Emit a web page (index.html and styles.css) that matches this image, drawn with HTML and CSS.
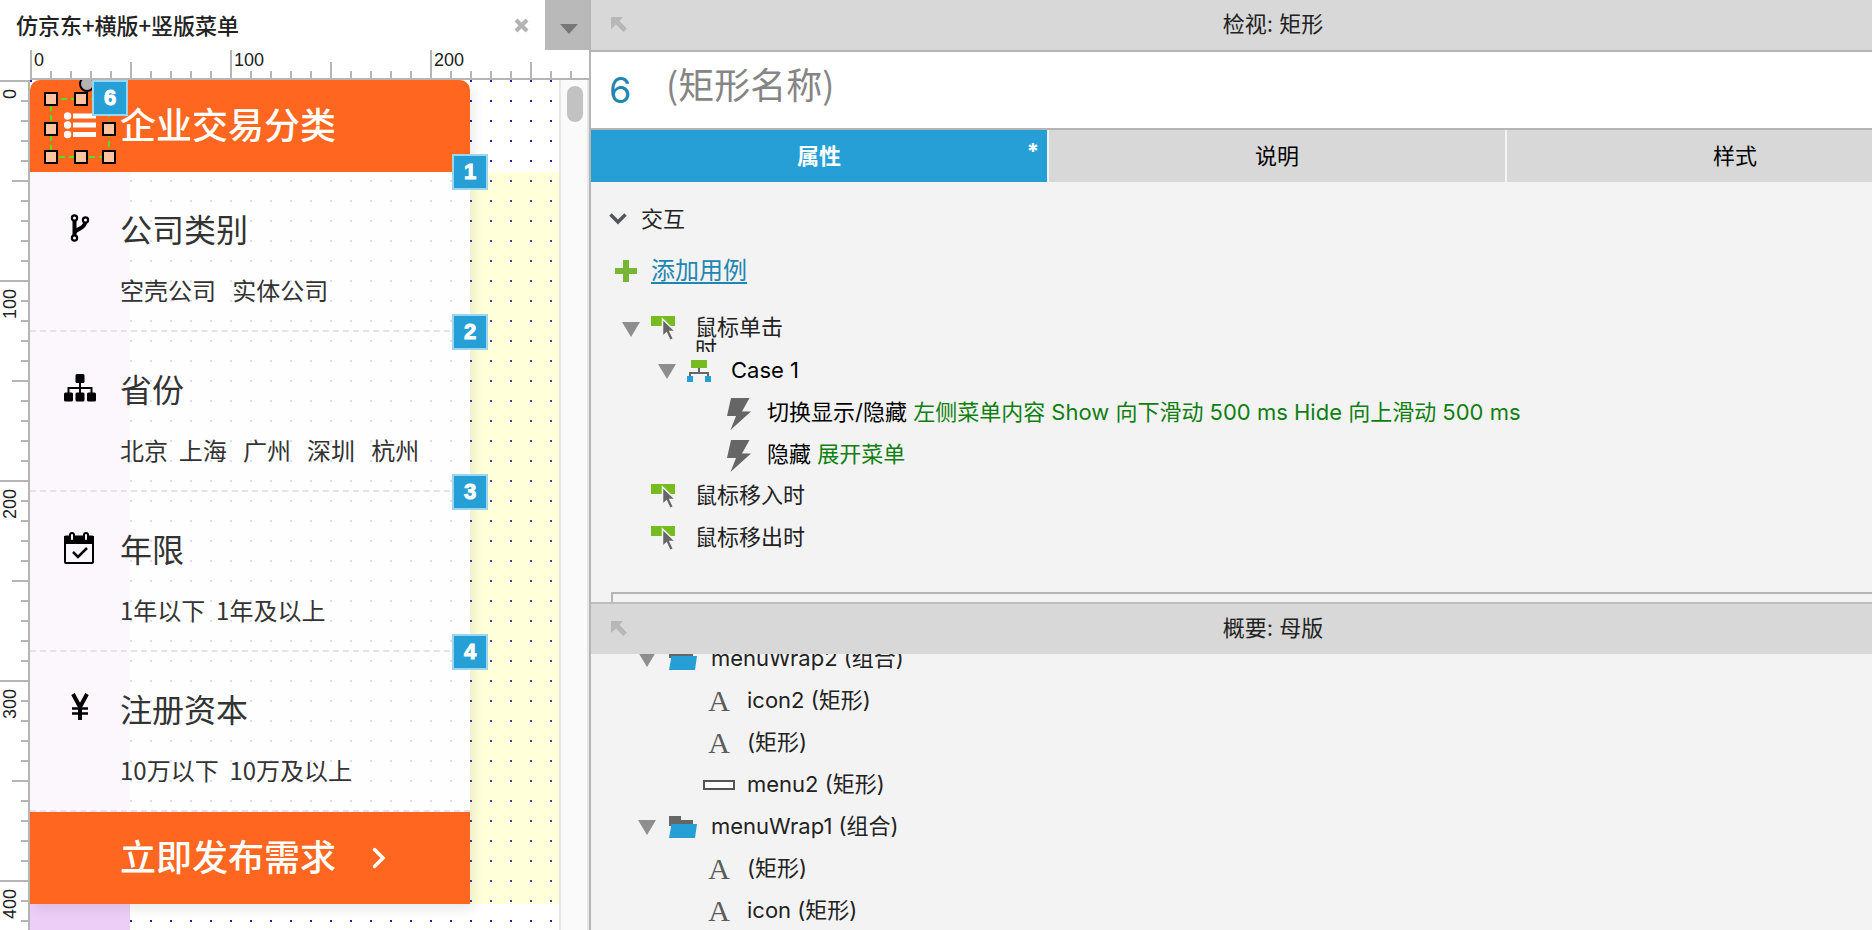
FILE: index.html
```html
<!DOCTYPE html>
<html lang="zh-CN">
<head>
<meta charset="utf-8">
<title>仿京东+横版+竖版菜单</title>
<link rel="stylesheet" href="styles.css">
</head>
<body>
<svg class="defs" aria-hidden="true">
  <symbol id="dock" viewBox="0 0 16 16"><path d="M0 0h12L8.500 4 16 11.500 12.500 15 5 7.500 0 12z"/></symbol>
  <symbol id="down" viewBox="0 0 18 15"><path d="M0 0h18L9 15z"/></symbol>
  <symbol id="event" viewBox="0 0 24 25"><path fill="#76bc21" d="M0 0h24v10H0z"/><path fill="#666" stroke="#f3f3f3" stroke-width="1.500" d="M11.500 3v17.500l4-3.500 3.500 7.500 3.500-1.500-3.500-7.500h5.500z"/></symbol>
  <symbol id="bolt" viewBox="0 0 24 32"><path d="M4 0h18.500l-7.500 13.500h9L3.500 32l5.500-14H0z"/></symbol>
  <symbol id="folder" viewBox="0 0 28 22"><path fill="#666" d="M0 0h12v4h12v6H0z"/><path fill="#269fd7" d="M2.500 8H28l-2 14H0z"/></symbol>
</svg>
<div class="app">
  <main class="workspace">
    <div class="doc-tabs">
      <span class="doc-title">仿京东+横版+竖版菜单</span>
      <button class="doc-close" aria-label="关闭"><svg width="15" height="15" viewBox="0 0 15 15"><path d="M2 2l11 11M13 2L2 13" stroke="#b3b3b3" stroke-width="4"/></svg></button>
      <button class="doc-more" aria-label="更多"><svg width="18" height="10" viewBox="0 0 18 10"><path d="M0 0h18L9 10z" fill="#777"/></svg></button>
    </div>
    <div class="ruler-x"><span>0</span><span>100</span><span>200</span></div>
    <div class="stage">
      <div class="ruler-y"><div><span>0</span></div><div><span>100</span></div><div><span>200</span></div><div><span>300</span></div><div><span>400</span></div></div>
      <div class="canvas">
        <div class="purple"></div>
        <div class="yellow"></div>
        <nav class="menu">
          <div class="menu-head">
            <svg class="menu-icon" viewBox="0 0 32 36" fill="#fff"><circle cx="3.500" cy="9" r="3.800"/><circle cx="3.500" cy="18" r="3.800"/><circle cx="3.500" cy="27.500" r="3.800"/><path d="M9 6.500h23v5H9zM9 15.500h23v5H9zM9 25h23v5H9z"/></svg>
            <span>企业交易分类</span>
          </div>
          <section class="item">
            <h2><svg class="menu-icon" viewBox="0 0 32 36" fill="none" stroke="#000"><path d="M10.500 10v16M10.500 23c1-5 10.500-3 11-12" stroke-width="4"/><g fill="#fff" stroke-width="2.200"><circle cx="10.500" cy="8" r="2.600"/><circle cx="21.500" cy="10" r="2.600"/><circle cx="10.500" cy="28" r="2.600"/></g></svg>公司类别</h2>
            <p>空壳公司&nbsp;&nbsp;&nbsp;实体公司</p>
          </section>
          <section class="item">
            <h2><svg class="menu-icon" viewBox="0 0 32 36"><path d="M4.500 24v-6h23v6M16 12v12" fill="none" stroke="#000" stroke-width="2"/><rect x="11.500" y="4" width="9" height="9" rx="1.500"/><rect y="22.500" width="9" height="9" rx="1.500"/><rect x="11.500" y="22.500" width="9" height="9" rx="1.500"/><rect x="23" y="22.500" width="9" height="9" rx="1.500"/></svg>省份</h2>
            <p>北京&nbsp;&nbsp;上海&nbsp;&nbsp;&nbsp;广州&nbsp;&nbsp;&nbsp;深圳&nbsp;&nbsp;&nbsp;杭州</p>
          </section>
          <section class="item">
            <h2><svg class="menu-icon" viewBox="0 0 32 36" fill="none" stroke="#000" stroke-width="2"><path d="M1 7h28v6H1z" fill="#000"/><rect x="1" y="6.500" width="28" height="26.500" rx="1"/><path d="M9 22l5 5 9-9" stroke-width="2.500"/><g fill="#fff"><rect x="6" y="3" width="4" height="8" rx="2"/><rect x="20" y="3" width="4" height="8" rx="2"/></g></svg>年限</h2>
            <p>1年以下&nbsp;&nbsp;1年及以上</p>
          </section>
          <section class="item">
            <h2><svg class="menu-icon" viewBox="0 0 32 36" fill="none" stroke="#000"><path d="M9 4l7 13L23 4M16 16v14" stroke-width="4"/><path d="M8 18.500h16M8 23.500h16" stroke-width="2.500"/></svg>注册资本</h2>
            <p>10万以下&nbsp;&nbsp;10万及以上</p>
          </section>
          <button class="menu-foot">立即发布需求<svg width="14" height="22" viewBox="0 0 14 22"><path d="M2.500 2.500L11 11l-8.500 8.500" fill="none" stroke="#fff" stroke-width="3.500" stroke-linecap="round"/></svg></button>
        </nav>
        <svg class="selection" width="90" height="90" viewBox="0 0 90 90">
          <circle cx="57" cy="4" r="7" fill="#b3b3b3" stroke="#000" stroke-width="2"/>
          <rect x="21" y="19" width="58" height="58" fill="none" stroke="#4fe02a" stroke-width="2" stroke-dasharray="6 4"/>
          <g fill="#ffc3a1" stroke="#000" stroke-width="2"><path d="M15 13h12v12H15zM45 13h12v12H45zM15 43h12v12H15zM73 43h12v12H73zM15 71h12v12H15zM45 71h12v12H45zM73 71h12v12H73z"/></g>
        </svg>
        <span class="badge b6">6</span>
        <span class="badge b1">1</span>
        <span class="badge b2">2</span>
        <span class="badge b3">3</span>
        <span class="badge b4">4</span>
      </div>
      <div class="scrollbar"><div class="thumb"></div></div>
    </div>
  </main>
  <aside class="side">
    <section class="inspector">
      <header class="pane-head"><svg class="dock"><use href="#dock"/></svg>检视: 矩形</header>
      <div class="name-row"><label for="shape-name">6</label><input id="shape-name" placeholder="(矩形名称)"></div>
      <div class="tabs">
        <button class="tab active">属性<span class="dirty">*</span></button>
        <button class="tab">说明</button>
        <button class="tab">样式</button>
      </div>
      <div class="props">
        <h3><svg width="18" height="12" viewBox="0 0 18 12"><path d="M1.500 1.500L9 9l7.500-7.500" fill="none" stroke="#55565c" stroke-width="3.500"/></svg>交互</h3>
        <div class="add"><svg width="22" height="22" viewBox="0 0 22 22"><path d="M8 0h6v8h8v6h-8v8H8v-8H0V8h8z" fill="#76b535"/></svg><a href="#">添加用例</a></div>
        <ul class="events">
          <li class="event open"><svg class="tri"><use href="#down"/></svg><svg class="ev-icon"><use href="#event"/></svg><span class="ev-name">鼠标单击时</span></li>
          <li class="case"><svg class="tri"><use href="#down"/></svg><svg width="24" height="22" viewBox="0 0 24 22"><path d="M3 16v-3h18v3M12 8v5" fill="none" stroke="#666" stroke-width="2"/><path d="M4 0h16v8H4z" fill="#76bc21"/><path d="M0 16h6v6H0zM18 16h6v6h-6z" fill="#269fd7"/></svg><span>Case 1</span></li>
          <li class="action"><svg class="bolt"><use href="#bolt"/></svg><span>切换显示/隐藏 <em>左侧菜单内容 Show 向下滑动 500 ms Hide 向上滑动 500 ms</em></span></li>
          <li class="action"><svg class="bolt"><use href="#bolt"/></svg><span>隐藏 <em>展开菜单</em></span></li>
          <li class="event"><svg class="ev-icon"><use href="#event"/></svg><span>鼠标移入时</span></li>
          <li class="event"><svg class="ev-icon"><use href="#event"/></svg><span>鼠标移出时</span></li>
        </ul>
        <div class="group-box"></div>
      </div>
    </section>
    <section class="outline">
      <header class="pane-head"><svg class="dock"><use href="#dock"/></svg>概要: 母版</header>
      <div class="tree-scroll">
        <ul class="tree">
          <li class="folder"><svg class="tri"><use href="#down"/></svg><svg class="dir"><use href="#folder"/></svg><span>menuWrap2 (组合)</span></li>
          <li class="leaf"><span class="glyph">A</span><span>icon2 (矩形)</span></li>
          <li class="leaf"><span class="glyph">A</span><span>(矩形)</span></li>
          <li class="leaf"><span class="glyph"><i class="box"></i></span><span>menu2 (矩形)</span></li>
          <li class="folder"><svg class="tri"><use href="#down"/></svg><svg class="dir"><use href="#folder"/></svg><span>menuWrap1 (组合)</span></li>
          <li class="leaf"><span class="glyph">A</span><span>(矩形)</span></li>
          <li class="leaf"><span class="glyph">A</span><span>icon (矩形)</span></li>
        </ul>
      </div>
    </section>
  </aside>
</div>
</body>
</html>
```
FILE: styles.css
```css
* { box-sizing: border-box; margin: 0; padding: 0; }
body { font: 22px/32px Inter, "Noto Sans CJK SC", sans-serif; color: #222; overflow: hidden; }
button { border: 0; background: none; font: inherit; color: inherit; cursor: pointer; }
ul { list-style: none; }
svg { display: block; flex: none; }
.defs { width: 0; height: 0; position: absolute; }
.app { display: flex; height: 100vh; }

/* Workspace */
.workspace { flex: none; width: 591px; display: flex; flex-direction: column; background: #fff; border-right: 2px solid #b5b5b5; }
.doc-tabs { flex: none; height: 50px; display: flex; align-items: center; padding-left: 16px; }
.doc-title { flex: 1; padding-bottom: 2px; font-family: "Noto Sans CJK SC", sans-serif; font-weight: 500; }
.doc-close { padding: 0 16px; }
.doc-more { width: 44px; height: 50px; background: #b9b9b9; display: flex; align-items: center; justify-content: center; padding: 8px 0 0 4px; }
.ruler-x {
  flex: none; height: 30px; margin-left: 30px; display: flex; overflow: hidden;
  font: 18px/20px "Liberation Sans", Arial, sans-serif;
  border-bottom: 2px solid #b5b5b5;
  background:
    linear-gradient(90deg, #b5b5b5 2px, transparent 2px) 0 100% / 20px 7px repeat-x,
    linear-gradient(90deg, #b5b5b5 2px, transparent 2px) 0 100% / 100px 16px repeat-x,
    linear-gradient(90deg, #b5b5b5 2px, transparent 2px) 0 100% / 200px 28px repeat-x;
}
.ruler-x span { flex: none; width: 200px; padding-left: 4px; }
.stage { flex: 1; min-height: 0; display: flex; }
.ruler-y {
  flex: none; width: 30px; overflow: hidden;
  font: 18px/20px "Liberation Sans", Arial, sans-serif;
  border-right: 2px solid #b5b5b5;
  background:
    linear-gradient(#b5b5b5 2px, transparent 2px) 100% 0 / 7px 20px repeat-y,
    linear-gradient(#b5b5b5 2px, transparent 2px) 100% 0 / 16px 100px repeat-y,
    linear-gradient(#b5b5b5 2px, transparent 2px) 100% 0 / 28px 200px repeat-y;
}
.ruler-y div { height: 200px; padding-top: 9px; }
.ruler-y span { display: block; width: 20px; writing-mode: vertical-rl; transform: rotate(180deg); }
.canvas {
  flex: 1; position: relative; overflow: hidden;
  background: conic-gradient(from 270deg at 2px 2px, #2a1fbe 90deg, transparent 0) 0 0 / 20px 20px;
}
.purple { position: absolute; left: 0; top: 92px; bottom: 0; width: 100px; background: #edcef7; }
.yellow { position: absolute; left: 440px; right: 0; top: 92px; height: 732px; background: rgba(255, 255, 0, .15); }
.menu { position: absolute; left: 0; top: 0; width: 440px; border-radius: 10px 10px 0 0; box-shadow: 4px 6px 12px rgba(0, 0, 0, .08); font-family: "Noto Sans CJK SC", sans-serif; color: #333; }
.menu-head, .menu-foot { display: flex; align-items: center; width: 100%; height: 92px; background: #ff6720; color: #fff; font-size: 36px; line-height: 52px; font-weight: 500; padding-bottom: 6px; }
.menu-head { gap: 24px; padding-left: 34px; border-radius: 10px 10px 0 0; }
.menu-head svg { margin-top: 4px; }
.menu-foot { gap: 36px; padding-left: 90px; }
.menu-foot svg { margin-top: 6px; }
.menu-icon { width: 32px; height: 36px; }
.item { height: 160px; padding: 32px 0 0 34px; background: rgba(254, 254, 254, .85); border-bottom: 2px dashed #e4e2e6; }
.item h2 { display: flex; align-items: center; gap: 24px; font-size: 32px; line-height: 48px; font-weight: 400; }
.item p { padding: 20px 0 0 56px; font-size: 24px; line-height: 36px; white-space: nowrap; }
.selection { position: absolute; left: 0; top: 0; }
.badge { position: absolute; width: 36px; height: 36px; border: 2px solid #9bd6ef; background: #269fd7; color: #fff; font: bold 22px/32px "Liberation Sans", Arial, sans-serif; text-align: center; -webkit-text-stroke: 1px #fff; }
.b6 { left: 62px; top: 0; }
.b1 { left: 422px; top: 74px; }
.b2 { left: 422px; top: 234px; }
.b3 { left: 422px; top: 394px; }
.b4 { left: 422px; top: 554px; }
.scrollbar { flex: none; width: 30px; background: #fafafa; border: solid #e6e6e6; border-width: 0 2px; padding: 6px; }
.thumb { width: 16px; height: 36px; border-radius: 8px; background: #c2c2c2; }

/* Side panes: the docked area runs on past the right edge of the window */
.side { flex: 1; min-width: 0; margin-right: -91px; display: flex; flex-direction: column; background: #f3f3f3; }
.inspector { flex: 1; min-height: 0; display: flex; flex-direction: column; overflow: hidden; }
.pane-head { flex: none; position: relative; height: 52px; border-bottom: 2px solid #b5b5b5; background: #d8d8d8; text-align: center; line-height: 48px; padding-right: 8px; }
.dock { position: absolute; left: 20px; top: 17px; width: 16px; height: 16px; fill: #b7b7b7; }
.name-row { flex: none; height: 78px; display: flex; padding-left: 18px; background: #fff; border-bottom: 2px solid #b5b5b5; }
.name-row label { width: 57px; padding-top: 12px; color: #1f86b2; font-size: 36px; line-height: 52px; }
.name-row input { flex: 1; height: 62px; border: 0; outline: 0; background: none; font: 36px/52px "Noto Sans CJK SC", sans-serif; }
.name-row input::placeholder { color: #858585; opacity: 1; }
.tabs { flex: none; display: grid; grid-template-columns: repeat(3, 1fr); gap: 2px; height: 52px; }
.tab { position: relative; background: #d8d8d8; color: #000; }
.tab.active { background: #269fd7; color: #fff; font-weight: 700; }
.dirty { position: absolute; right: 8px; top: 5px; }
.props { flex: 1; padding: 21px 0 0 20px; }
.props h3 { display: flex; align-items: center; gap: 14px; margin-left: -2px; font-size: 22px; font-weight: 400; }
.add { display: flex; align-items: center; gap: 14px; padding-left: 4px; margin-top: 18px; height: 36px; font-size: 24px; }
.add a { color: #1f86b2; text-underline-offset: 3px; text-decoration-thickness: 2px; }
.events { margin-top: 21px; color: #000; }
.events li { display: flex; height: 42px; }
.tri { width: 18px; height: 15px; fill: #8e8e8e; }
.event { padding: 6px 0 0 40px; }
.event span { line-height: 22px; color: #222; }
.event.open { padding-left: 11px; }
.event.open .tri { margin: 6px 11px 0 0; }
.ev-icon { width: 24px; height: 25px; margin-right: 20px; }
.ev-name { width: 92px; height: 36px; overflow: hidden; }
.case { padding: 3px 0 7px 47px; align-items: center; }
.case .tri { margin-right: 11px; }
.case span { margin-left: 20px; padding-bottom: 2px; }
.action { padding-left: 116px; align-items: center; gap: 16px; padding-bottom: 2px; white-space: nowrap; }
.action span { padding-bottom: 4px; }
.bolt { width: 24px; height: 32px; fill: #666; }
.action em { font-style: normal; color: #0f7f0f; }
.group-box { margin-top: 30px; height: 40px; border: 2px solid #b5b5b5; }
.outline { flex: none; height: 328px; display: flex; flex-direction: column; }
.outline .pane-head { border-bottom: 0; border-top: 2px solid #bdbdbd; }
.tree-scroll { flex: 1; min-height: 0; overflow: hidden; }
.tree { margin-top: -16px; }
.tree li { display: flex; align-items: center; height: 42px; }
.tree li > span:last-child { padding-bottom: 2px; }
.folder { padding-left: 47px; }
.folder .tri { margin-right: 13px; }
.dir { width: 28px; height: 22px; margin-right: 14px; }
.leaf { padding-left: 112px; }
.glyph { flex: none; width: 32px; margin-right: 12px; text-align: center; font: 30px/32px "Liberation Serif", "Times New Roman", serif; color: #5c5c5c; }
.box { display: block; height: 10px; border: 2px solid #555; background: #fff; }
```
